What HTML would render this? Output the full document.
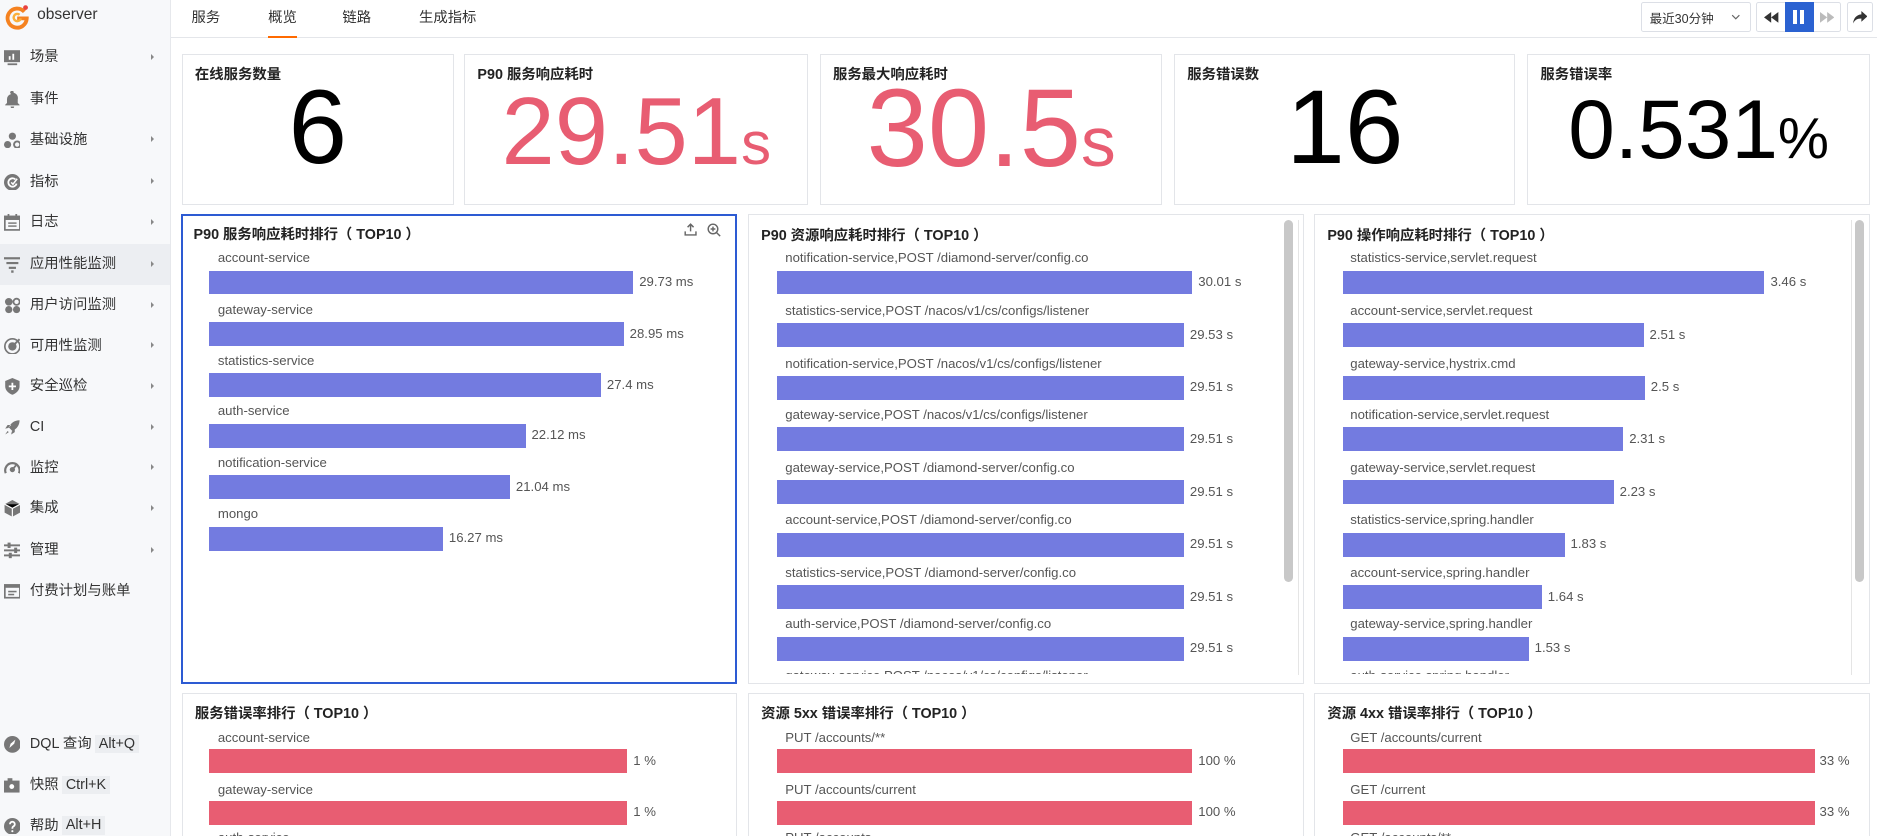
<!DOCTYPE html>
<html><head><meta charset="utf-8">
<style>
*{margin:0;padding:0;box-sizing:border-box}
html,body{width:1877px;height:836px;overflow:hidden;background:#fff}
#w{position:relative;width:1568px;height:699px;zoom:1.19707;font-family:"Liberation Sans","Noto Sans CJK SC",sans-serif;color:#333;overflow:hidden}
.a{position:absolute;white-space:nowrap}
#sb{position:absolute;left:0;top:0;width:143px;height:699px;background:#f7f8fa;border-right:1px solid #e6e8ec}
.mi{position:absolute;left:0;width:142px;height:34px;font-size:12px;line-height:34px;padding-left:25px;color:#333}
.mi .ic{position:absolute;left:3px;top:10px;width:14px;height:14px}
.mi .ar{position:absolute;left:126px;top:14px;width:0;height:0;border-left:3px solid #888;border-top:3px solid transparent;border-bottom:3px solid transparent}
.kb{background:#eceef1;padding:1px 3px;margin-left:3px}
.card{position:absolute;border:1px solid #e3e5e9;background:#fff;overflow:hidden}
.ct{position:absolute;left:10px;top:7px;font-size:12px;font-weight:bold;color:#222;white-space:nowrap}
.big{position:absolute;left:0;right:0;text-align:center;white-space:nowrap;line-height:1}
.lb{position:absolute;font-size:11px;color:#555;white-space:nowrap}
.bar{position:absolute;height:20px;background:#737be0}
.bar.r{background:#e85d72}
.vl{position:absolute;font-size:11px;color:#555;white-space:nowrap}
</style></head><body><div id="w">

<div id="sb">
 <svg class="a" style="left:3px;top:3px" width="22" height="22" viewBox="0 0 22 22"><path d="M17 6.5A8 8 0 1 0 19 12H11" fill="none" stroke="#f58220" stroke-width="3.2"/><path d="M14 12a3 3 0 1 1-1-3" fill="none" stroke="#fbb03b" stroke-width="2"/><circle cx="18" cy="3" r="2" fill="#e8423f"/></svg>
 <div class="a" style="left:31px;top:5px;font-size:13px;color:#333">observer</div>

 <div class="mi" style="top:31px"><svg class="ic" viewBox="0 0 14 14"><rect x="0" y="1" width="14" height="10" fill="#777"/><rect x="4" y="6" width="1.5" height="3" fill="#fff"/><rect x="7" y="4" width="1.5" height="5" fill="#fff"/><rect x="3" y="12" width="8" height="1.5" fill="#777"/></svg>场景<i class="ar"></i></div>
 <div class="mi" style="top:66px"><svg class="ic" viewBox="0 0 14 14"><path d="M7 0a1 1 0 0 1 1 1.5A4.5 4.5 0 0 1 11.5 7v3l1.5 1.5V12H1v-.5L2.5 10V7A4.5 4.5 0 0 1 6 2.5 1 1 0 0 1 7 0zM5.5 13h3a1.5 1.5 0 0 1-3 0z" fill="#777"/></svg>事件</div>
 <div class="mi" style="top:100px"><svg class="ic" viewBox="0 0 14 14"><circle cx="7" cy="3.5" r="3" fill="#777"/><circle cx="3" cy="10.5" r="3" fill="#777"/><circle cx="11" cy="10.5" r="2.6" fill="none" stroke="#777" stroke-width="1.6"/></svg>基础设施<i class="ar"></i></div>
 <div class="mi" style="top:135px"><svg class="ic" viewBox="0 0 14 14"><circle cx="7" cy="7" r="7" fill="#777"/><path d="M9.5 4.5A3.5 3.5 0 1 0 10.5 8" fill="none" stroke="#fff" stroke-width="1.5"/><path d="M6 7l1.5 1.5L11 4" fill="none" stroke="#fff" stroke-width="1.3"/></svg>指标<i class="ar"></i></div>
 <div class="mi" style="top:169px"><svg class="ic" viewBox="0 0 14 14"><rect x="0.7" y="2" width="12.6" height="11.3" fill="none" stroke="#777" stroke-width="1.4"/><rect x="0" y="2" width="14" height="3" fill="#777"/><rect x="3" y="0" width="1.5" height="3" fill="#777"/><rect x="9.5" y="0" width="1.5" height="3" fill="#777"/><rect x="3.5" y="7" width="7" height="1.2" fill="#777"/><rect x="3.5" y="9.5" width="7" height="1.2" fill="#777"/></svg>日志<i class="ar"></i></div>
 <div class="mi" style="top:204px;background:#eceef2"><svg class="ic" viewBox="0 0 14 14"><rect x="0" y="1" width="14" height="1.8" fill="#777"/><rect x="2" y="5" width="10" height="1.8" fill="#777"/><rect x="4" y="9" width="6" height="1.8" fill="#777"/><rect x="6" y="12" width="2" height="2" fill="#777"/></svg>应用性能监测<i class="ar"></i></div>
 <div class="mi" style="top:238px"><svg class="ic" viewBox="0 0 14 14"><circle cx="4" cy="4" r="3.2" fill="#777"/><circle cx="10.5" cy="4" r="2.6" fill="none" stroke="#777" stroke-width="1.5"/><circle cx="4" cy="10.5" r="3" fill="#777"/><circle cx="10.5" cy="10.5" r="3" fill="#777"/></svg>用户访问监测<i class="ar"></i></div>
 <div class="mi" style="top:272px"><svg class="ic" viewBox="0 0 14 14"><circle cx="7" cy="7" r="6.3" fill="none" stroke="#777" stroke-width="1.4"/><circle cx="7" cy="7" r="3.5" fill="#777"/><path d="M7 7L13 1" stroke="#777" stroke-width="1.6"/></svg>可用性监测<i class="ar"></i></div>
 <div class="mi" style="top:306px"><svg class="ic" viewBox="0 0 14 14"><path d="M7 0L13 2.5V7c0 3.5-3 6-6 7C4 13 1 10.5 1 7V2.5z" fill="#777"/><path d="M4 7h6M7 4v6" stroke="#fff" stroke-width="1.5"/></svg>安全巡检<i class="ar"></i></div>
 <div class="mi" style="top:340px"><svg class="ic" viewBox="0 0 14 14"><path d="M13 1c-4 0-7 2-9 6l3 3c4-2 6-5 6-9zM3.5 7.5L1 8l2-3h3zM6.5 10.5L6 13l3-2V8zM3 10l-2 3 3-2z" fill="#777"/></svg>CI<i class="ar"></i></div>
 <div class="mi" style="top:374px"><svg class="ic" viewBox="0 0 14 14"><path d="M1.5 11A6 6 0 1 1 12.5 11" fill="none" stroke="#777" stroke-width="1.8"/><circle cx="7" cy="8" r="2.2" fill="#777"/><path d="M7 8L10 4.5" stroke="#777" stroke-width="1.5"/></svg>监控<i class="ar"></i></div>
 <div class="mi" style="top:408px"><svg class="ic" viewBox="0 0 14 14"><path d="M7 0L13.5 3.5V10.5L7 14L0.5 10.5V3.5z" fill="#777"/><path d="M0.5 3.5L7 7L13.5 3.5M7 7V14" stroke="#fff" stroke-width="1"/></svg>集成<i class="ar"></i></div>
 <div class="mi" style="top:443px"><svg class="ic" viewBox="0 0 14 14"><rect x="0" y="2" width="14" height="1.6" fill="#777"/><rect x="0" y="6.2" width="14" height="1.6" fill="#777"/><rect x="0" y="10.4" width="14" height="1.6" fill="#777"/><rect x="3" y="0.5" width="2.5" height="4.5" fill="#777"/><rect x="8.5" y="4.7" width="2.5" height="4.5" fill="#777"/><rect x="4" y="9" width="2.5" height="4.5" fill="#777"/></svg>管理<i class="ar"></i></div>
 <div class="mi" style="top:477px"><svg class="ic" viewBox="0 0 14 14"><rect x="0.7" y="1.7" width="12.6" height="10.6" fill="none" stroke="#777" stroke-width="1.4"/><rect x="0" y="1" width="14" height="3" fill="#777"/><rect x="3.5" y="6.5" width="7" height="1.3" fill="#777"/><rect x="3.5" y="9" width="5" height="1.3" fill="#777"/></svg>付费计划与账单</div>

 <div class="mi" style="top:605px"><svg class="ic" viewBox="0 0 14 14"><circle cx="7" cy="7" r="7" fill="#777"/><path d="M4.5 10l1-3.5 4-3.5-1 3.5z" fill="#fff"/></svg>DQL 查询<span class="kb">Alt+Q</span></div>
 <div class="mi" style="top:639px"><svg class="ic" viewBox="0 0 14 14"><rect x="0" y="3" width="13" height="10" fill="#777"/><rect x="3" y="1" width="4" height="3" fill="#777"/><circle cx="6.5" cy="8" r="2" fill="#fff"/></svg>快照<span class="kb">Ctrl+K</span></div>
 <div class="mi" style="top:673px"><svg class="ic" viewBox="0 0 14 14"><circle cx="7" cy="7" r="7" fill="#777"/><path d="M5 5.2a2 2 0 1 1 2.8 1.8C7 7.4 7 8 7 9" fill="none" stroke="#fff" stroke-width="1.5"/><circle cx="7" cy="11" r="0.9" fill="#fff"/></svg>帮助<span class="kb">Alt+H</span></div>
</div>

<!-- header -->
<div class="a" style="left:143px;top:0;width:1425px;height:32px;border-bottom:1px solid #e4e6ea"></div>
<div class="a" style="left:160px;top:5px;font-size:12px;color:#333">服务</div>
<div class="a" style="left:224px;top:5px;font-size:12px;color:#333">概览</div>
<div class="a" style="left:224px;top:30px;width:24px;height:2px;background:#ff6a00"></div>
<div class="a" style="left:286px;top:5px;font-size:12px;color:#333">链路</div>
<div class="a" style="left:350px;top:5px;font-size:12px;color:#333">生成指标</div>

<div class="a" style="left:1371px;top:2px;width:92px;height:25px;border:1px solid #dcdfe6;border-radius:2px"></div>
<div class="a" style="left:1378px;top:7px;font-size:10.5px;color:#333">最近30分钟</div>
<svg class="a" style="left:1446px;top:12px" width="8" height="6" viewBox="0 0 8 6"><path d="M1 1l3 3 3-3" fill="none" stroke="#666" stroke-width="1"/></svg>
<div class="a" style="left:1467px;top:2px;width:71px;height:25px;border:1px solid #dcdfe6;border-radius:2px"></div>
<svg class="a" style="left:1474px;top:10px" width="12" height="9" viewBox="0 0 12 9"><path d="M6 0v9L0 4.5zM12 0v9L6 4.5z" fill="#333"/></svg>
<div class="a" style="left:1491px;top:2px;width:24px;height:25px;background:#2b62d1"></div>
<div class="a" style="left:1498px;top:8px;width:3px;height:12px;background:#fff"></div>
<div class="a" style="left:1504px;top:8px;width:3px;height:12px;background:#fff"></div>
<svg class="a" style="left:1520px;top:10px" width="12" height="9" viewBox="0 0 12 9"><path d="M0 0v9L6 4.5zM6 0v9L12 4.5z" fill="#bbb"/></svg>
<div class="a" style="left:1543px;top:2px;width:22px;height:25px;border:1px solid #dcdfe6;border-radius:2px"></div>
<svg class="a" style="left:1548px;top:9px" width="12" height="11" viewBox="0 0 12 11"><path d="M7 0l5 4.5L7 9V6.3C3.5 6.3 1.5 7.5 0 10.5 0.5 6 2.8 3.2 7 2.8z" fill="#333"/></svg>

<!-- stat cards -->
<div class="card" style="left:152px;top:45px;width:227px;height:126px"><div class="ct">在线服务数量</div><div class="big" style="top:17px;font-size:88px;color:#000">6</div></div>
<div class="card" style="left:388px;top:45px;width:287px;height:126px"><div class="ct">P90 服务响应耗时</div><div class="big" style="top:24px;font-size:80px;color:#e85d72">29.51<span style="font-size:50px">s</span></div></div>
<div class="card" style="left:685px;top:45px;width:286px;height:126px"><div class="ct">服务最大响应耗时</div><div class="big" style="top:16px;font-size:92px;color:#e85d72">30.5<span style="font-size:58px">s</span></div></div>
<div class="card" style="left:981px;top:45px;width:285px;height:126px"><div class="ct">服务错误数</div><div class="big" style="top:17px;font-size:88px;color:#000">16</div></div>
<div class="card" style="left:1276px;top:45px;width:286px;height:126px"><div class="ct">服务错误率</div><div class="big" style="top:28px;font-size:70px;color:#000">0.531<span style="font-size:48px">%</span></div></div>

<!-- middle row -->
<div class="card" style="left:151px;top:179px;width:465px;height:392px;border:2px solid #2d5bd3">
 <div class="ct" style="left:9px;top:6px">P90 服务响应耗时排行（ TOP10 ）</div>
 <svg class="a" style="left:419px;top:6px" width="11" height="11" viewBox="0 0 11 11"><path d="M5.5 1v6M3 3.5L5.5 1 8 3.5M1 7v3h9V7" fill="none" stroke="#666" stroke-width="1.2"/></svg>
 <svg class="a" style="left:438px;top:6px" width="12" height="12" viewBox="0 0 12 12"><circle cx="5" cy="5" r="4" fill="none" stroke="#666" stroke-width="1.2"/><path d="M8 8l3 3M3 5h4M5 3v4" stroke="#666" stroke-width="1.2"/></svg>
</div>
<div class="card" style="left:625px;top:179px;width:464px;height:392px"><div class="ct">P90 资源响应耗时排行（ TOP10 ）</div></div>
<div class="a" style="left:1073px;top:184px;width:7px;height:302px;background:#c8c8c8;border-radius:4px"></div>
<div class="a" style="left:1084px;top:184px;width:1px;height:380px;background:#e5e5e5"></div>
<div class="card" style="left:1098px;top:179px;width:464px;height:392px"><div class="ct">P90 操作响应耗时排行（ TOP10 ）</div></div>
<div class="a" style="left:1550px;top:184px;width:7px;height:302px;background:#c8c8c8;border-radius:4px"></div>
<div class="a" style="left:1546px;top:184px;width:1px;height:380px;background:#e5e5e5"></div>

<!-- card1 bars -->
<div class="lb" style="left:182px;top:209px">account-service</div><div class="bar" style="left:175px;top:226px;width:354px"></div><div class="vl" style="left:534px;top:229px">29.73 ms</div>
<div class="lb" style="left:182px;top:252px">gateway-service</div><div class="bar" style="left:175px;top:269px;width:346px"></div><div class="vl" style="left:526px;top:272px">28.95 ms</div>
<div class="lb" style="left:182px;top:295px">statistics-service</div><div class="bar" style="left:175px;top:312px;width:327px"></div><div class="vl" style="left:507px;top:315px">27.4 ms</div>
<div class="lb" style="left:182px;top:337px">auth-service</div><div class="bar" style="left:175px;top:354px;width:264px"></div><div class="vl" style="left:444px;top:357px">22.12 ms</div>
<div class="lb" style="left:182px;top:380px">notification-service</div><div class="bar" style="left:175px;top:397px;width:251px"></div><div class="vl" style="left:431px;top:400px">21.04 ms</div>
<div class="lb" style="left:182px;top:423px">mongo</div><div class="bar" style="left:175px;top:440px;width:195px"></div><div class="vl" style="left:375px;top:443px">16.27 ms</div>

<!-- card2 bars -->
<div class="a" style="left:626px;top:205px;width:445px;height:358px;overflow:hidden">
 <div class="lb" style="left:30px;top:4px">notification-service,POST /diamond-server/config.co</div><div class="bar" style="left:23px;top:21px;width:347px"></div><div class="vl" style="left:375px;top:24px">30.01 s</div>
 <div class="lb" style="left:30px;top:48px">statistics-service,POST /nacos/v1/cs/configs/listener</div><div class="bar" style="left:23px;top:65px;width:340px"></div><div class="vl" style="left:368px;top:68px">29.53 s</div>
 <div class="lb" style="left:30px;top:92px">notification-service,POST /nacos/v1/cs/configs/listener</div><div class="bar" style="left:23px;top:109px;width:340px"></div><div class="vl" style="left:368px;top:112px">29.51 s</div>
 <div class="lb" style="left:30px;top:135px">gateway-service,POST /nacos/v1/cs/configs/listener</div><div class="bar" style="left:23px;top:152px;width:340px"></div><div class="vl" style="left:368px;top:155px">29.51 s</div>
 <div class="lb" style="left:30px;top:179px">gateway-service,POST /diamond-server/config.co</div><div class="bar" style="left:23px;top:196px;width:340px"></div><div class="vl" style="left:368px;top:199px">29.51 s</div>
 <div class="lb" style="left:30px;top:223px">account-service,POST /diamond-server/config.co</div><div class="bar" style="left:23px;top:240px;width:340px"></div><div class="vl" style="left:368px;top:243px">29.51 s</div>
 <div class="lb" style="left:30px;top:267px">statistics-service,POST /diamond-server/config.co</div><div class="bar" style="left:23px;top:284px;width:340px"></div><div class="vl" style="left:368px;top:287px">29.51 s</div>
 <div class="lb" style="left:30px;top:310px">auth-service,POST /diamond-server/config.co</div><div class="bar" style="left:23px;top:327px;width:340px"></div><div class="vl" style="left:368px;top:330px">29.51 s</div>
 <div class="lb" style="left:30px;top:353px">gateway-service,POST /nacos/v1/cs/configs/listener</div>
</div>

<!-- card3 bars -->
<div class="a" style="left:1099px;top:205px;width:445px;height:358px;overflow:hidden">
 <div class="lb" style="left:29px;top:4px">statistics-service,servlet.request</div><div class="bar" style="left:23px;top:21px;width:352px"></div><div class="vl" style="left:380px;top:24px">3.46 s</div>
 <div class="lb" style="left:29px;top:48px">account-service,servlet.request</div><div class="bar" style="left:23px;top:65px;width:251px"></div><div class="vl" style="left:279px;top:68px">2.51 s</div>
 <div class="lb" style="left:29px;top:92px">gateway-service,hystrix.cmd</div><div class="bar" style="left:23px;top:109px;width:252px"></div><div class="vl" style="left:280px;top:112px">2.5 s</div>
 <div class="lb" style="left:29px;top:135px">notification-service,servlet.request</div><div class="bar" style="left:23px;top:152px;width:234px"></div><div class="vl" style="left:262px;top:155px">2.31 s</div>
 <div class="lb" style="left:29px;top:179px">gateway-service,servlet.request</div><div class="bar" style="left:23px;top:196px;width:226px"></div><div class="vl" style="left:254px;top:199px">2.23 s</div>
 <div class="lb" style="left:29px;top:223px">statistics-service,spring.handler</div><div class="bar" style="left:23px;top:240px;width:185px"></div><div class="vl" style="left:213px;top:243px">1.83 s</div>
 <div class="lb" style="left:29px;top:267px">account-service,spring.handler</div><div class="bar" style="left:23px;top:284px;width:166px"></div><div class="vl" style="left:194px;top:287px">1.64 s</div>
 <div class="lb" style="left:29px;top:310px">gateway-service,spring.handler</div><div class="bar" style="left:23px;top:327px;width:155px"></div><div class="vl" style="left:183px;top:330px">1.53 s</div>
 <div class="lb" style="left:29px;top:353px">auth-service,spring.handler</div>
</div>

<!-- bottom row -->
<div class="card" style="left:152px;top:579px;width:464px;height:130px"><div class="ct">服务错误率排行（ TOP10 ）</div></div>
<div class="card" style="left:625px;top:579px;width:464px;height:130px"><div class="ct">资源 5xx 错误率排行（ TOP10 ）</div></div>
<div class="card" style="left:1098px;top:579px;width:464px;height:130px"><div class="ct">资源 4xx 错误率排行（ TOP10 ）</div></div>

<div class="lb" style="left:182px;top:610px">account-service</div><div class="bar r" style="left:175px;top:626px;width:349px"></div><div class="vl" style="left:529px;top:629px">1 %</div>
<div class="lb" style="left:182px;top:653px">gateway-service</div><div class="bar r" style="left:175px;top:669px;width:349px"></div><div class="vl" style="left:529px;top:672px">1 %</div>
<div class="lb" style="left:182px;top:693px">auth-service</div>

<div class="lb" style="left:656px;top:610px">PUT /accounts/**</div><div class="bar r" style="left:649px;top:626px;width:347px"></div><div class="vl" style="left:1001px;top:629px">100 %</div>
<div class="lb" style="left:656px;top:653px">PUT /accounts/current</div><div class="bar r" style="left:649px;top:669px;width:347px"></div><div class="vl" style="left:1001px;top:672px">100 %</div>
<div class="lb" style="left:656px;top:693px">PUT /accounts</div>

<div class="lb" style="left:1128px;top:610px">GET /accounts/current</div><div class="bar r" style="left:1122px;top:626px;width:394px"></div><div class="vl" style="left:1520px;top:629px">33 %</div>
<div class="lb" style="left:1128px;top:653px">GET /current</div><div class="bar r" style="left:1122px;top:669px;width:394px"></div><div class="vl" style="left:1520px;top:672px">33 %</div>
<div class="lb" style="left:1128px;top:693px">GET /accounts/**</div>

</div></body></html>
